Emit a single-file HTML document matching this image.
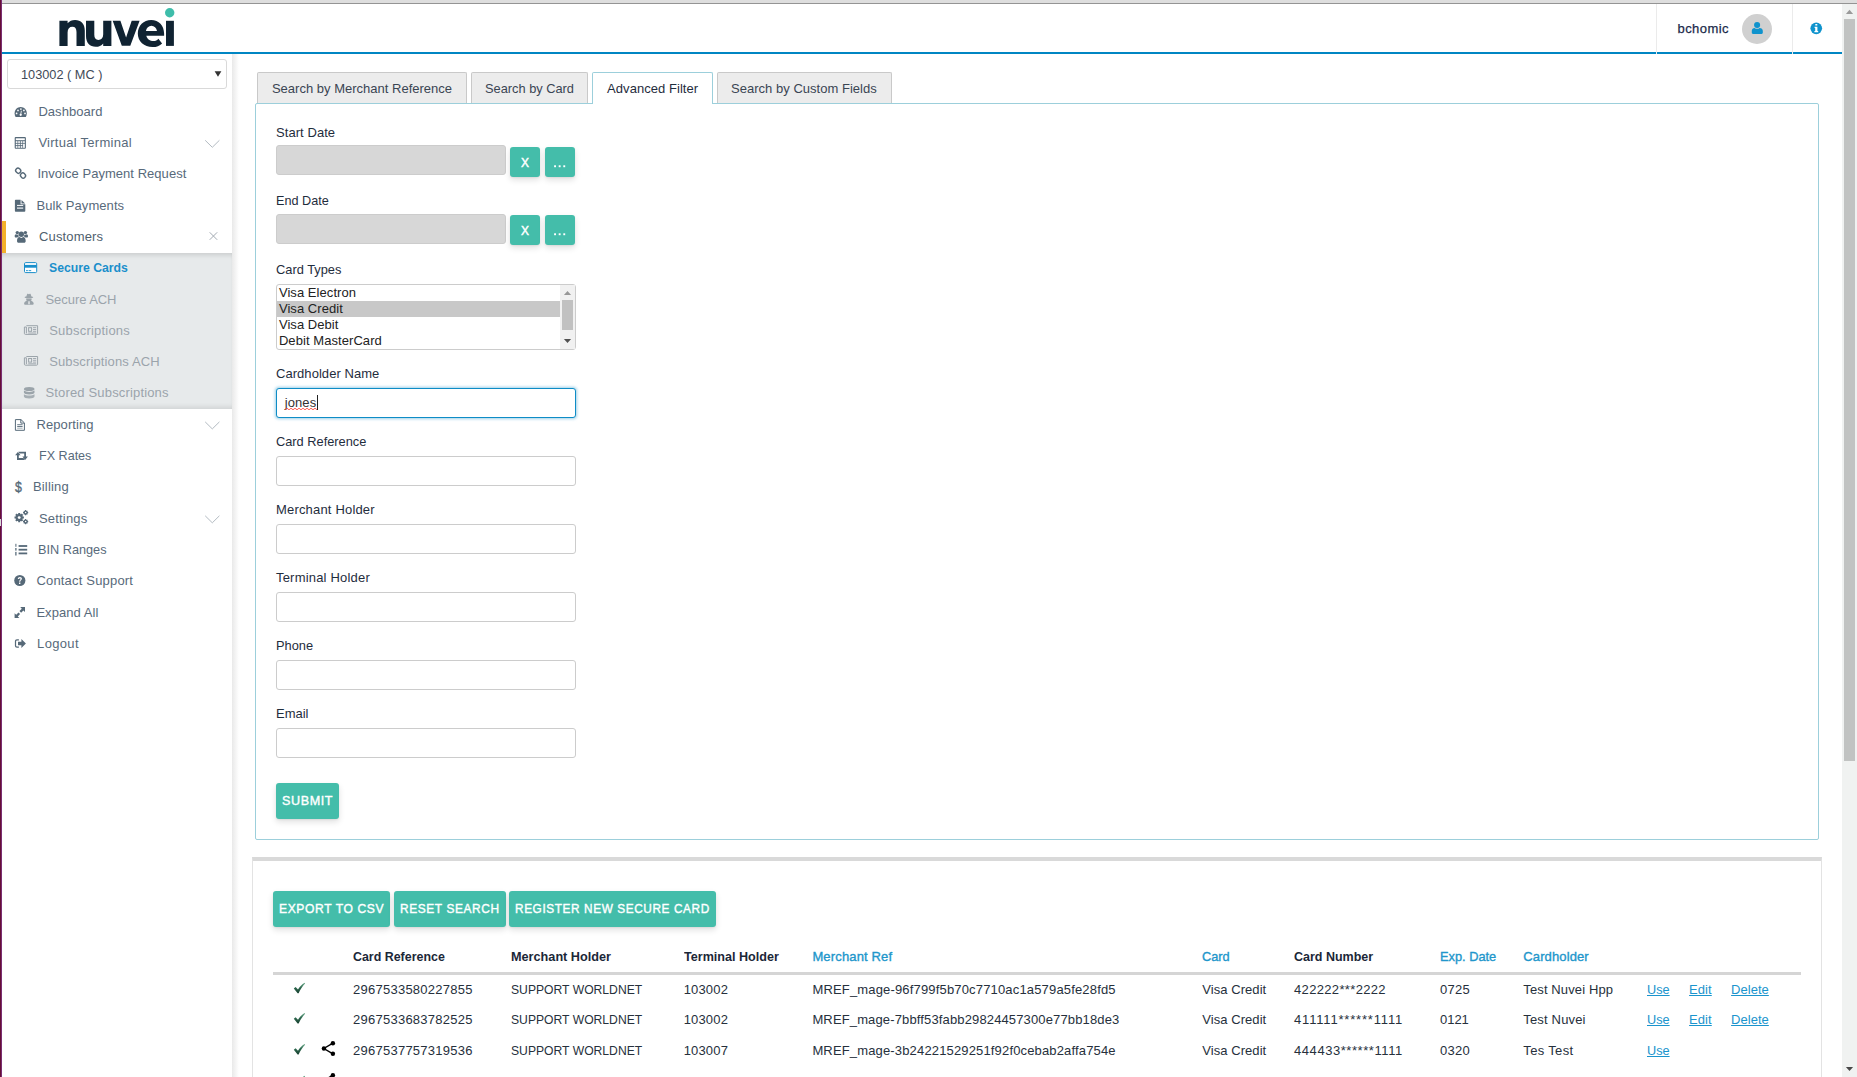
<!DOCTYPE html>
<html>
<head>
<meta charset="utf-8">
<title>Secure Cards</title>
<style>
*{box-sizing:border-box;margin:0;padding:0}
html,body{width:1857px;height:1077px;overflow:hidden;background:#fff}
body{font-family:"Liberation Sans",sans-serif;font-size:13px;color:#1f2d3d;position:relative}
.abs{position:absolute}
.tx{position:absolute;white-space:pre;line-height:20px;font-family:"Liberation Sans",sans-serif}
svg{position:absolute;overflow:visible}
/* window chrome */
#topstrip{left:0;top:0;width:1857px;height:3px;background:#dedede}
#topline{left:2px;top:3px;width:1855px;height:1px;background:#949494}
#leftstripe{left:0;top:0;width:2px;height:1077px;background:linear-gradient(to right,#660f36 0,#660f36 50%,#7a2e72 50%,#7a2e72 100%)}
/* header */
#blueline{left:2px;top:52px;width:1840px;height:2px;background:#0086c3}
.hdiv{top:4px;width:1px;height:50px;background:#ebebeb}
#avatar{left:1742px;top:14px;width:30px;height:30px;border-radius:50%;background:#d0d0d0}
/* scrollbar */
#sbtrack{left:1842px;top:4px;width:15px;height:1073px;background:#f0f2f1}
#sbthumb{left:1844px;top:19px;width:11px;height:742px;background:#c1c3c2}
/* sidebar */
#sideshadow{left:232px;top:54px;width:7px;height:1023px;background:linear-gradient(to right,#e9e9e9,#fff)}
#msel{left:7px;top:59px;width:220px;height:30px;border:1px solid #d9d9d9;border-radius:3px;background:#fff}
#submenu{left:2px;top:253px;width:230px;height:156px;background:#e7eaeb;box-shadow:inset 0 5px 5px -3px rgba(0,0,0,.13),inset 0 -5px 5px -3px rgba(0,0,0,.10)}
#orange{left:2px;top:221px;width:4px;height:32px;background:#f3b02b}
/* tabs */
.tab{top:72px;height:31px;border:1px solid #c9c9c9;border-bottom:none;border-radius:2px 2px 0 0;background:#ececec}
.tab.active{background:#fff;border-color:#9ccfdb;height:31px}
#tabgap{left:593px;top:103px;width:119px;height:1px;background:#fff}
#panel{left:255px;top:103px;width:1564px;height:737px;border:1px solid #9ccfdb;border-radius:2px;background:#fff}
.inp{left:276px;width:300px;height:30px;border:1px solid #ccc;border-radius:3px;background:#fff}
.dinp{left:276px;width:230px;height:30px;border-radius:3px;background:#d7d7d7;border:1px solid #cccccc}
.btn{background:#44bdaa;color:#fff;border-radius:3px;font-weight:bold;font-size:13px;text-align:center;white-space:nowrap;box-shadow:0 3px 6px rgba(0,0,0,.12),0 1px 2px rgba(0,0,0,.06)}
.sbtn{width:30px;height:30px;line-height:30px;font-weight:normal;font-size:14px}
.dot{width:1.8px;height:1.8px;background:#fff}
.bbtn{top:891px;height:36px;line-height:36px;letter-spacing:.6px}
/* listbox */
#lb{left:276px;top:284px;width:300px;height:66px;border:1px solid #ccc;border-radius:3px;background:#fff;overflow:hidden}
#lbsel{left:277px;top:301px;width:283px;height:16px;background:#c8c8c8}
#lbtrack{left:560px;top:285px;width:15px;height:64px;background:#f1f1f1}
#lbthumb{left:562px;top:300px;width:11px;height:30px;background:#c1c1c1}
#focus{left:276px;top:388px;width:300px;height:30px;border:1px solid #0e8cc6;border-radius:3px;background:#fff;box-shadow:0 0 3px 1px rgba(14,140,198,.4)}
/* results box */
#box{left:252px;top:857px;width:1570px;height:230px;border:1px solid #e3e3e3;border-top:4px solid #d9d9d9;background:#fff}
#thline{left:273px;top:972px;width:1528px;height:3px;background:#d5d5d5}
</style>
</head>
<body>
<div class="abs" id="topstrip"></div>
<div class="abs" id="topline"></div>

<!-- header -->
<div class="abs" id="blueline"></div>
<div class="abs hdiv" style="left:1656px"></div>
<div class="abs hdiv" style="left:1792px"></div>
<div class="abs" id="avatar"></div>

<!-- sidebar -->
<div class="abs" id="sideshadow"></div>
<div class="abs" id="msel"></div>
<div class="abs" id="submenu"></div>
<div class="abs" id="orange"></div>

<!-- tabs + panel -->
<div class="abs" id="panel"></div>
<div class="abs tab" style="left:257px;width:210px"></div>
<div class="abs tab" style="left:471px;width:117px"></div>
<div class="abs tab active" style="left:592px;width:121px"></div>
<div class="abs tab" style="left:717px;width:175px"></div>
<div class="abs" id="tabgap"></div>

<!-- form -->
<div class="abs dinp" style="top:145px"></div>
<div class="abs btn sbtn" style="left:510px;top:147px"></div>
<div class="abs btn sbtn" style="left:545px;top:147px"></div>
<div class="abs dinp" style="top:214px"></div>
<div class="abs btn sbtn" style="left:510px;top:215px"></div>
<div class="abs btn sbtn" style="left:545px;top:215px"></div>
<div class="abs" id="lb"></div>
<div class="abs" id="lbsel"></div>
<div class="abs" id="lbtrack"></div>
<div class="abs" id="lbthumb"></div>
<div class="abs" id="focus"></div>
<div class="abs inp" style="top:456px"></div>
<div class="abs inp" style="top:524px"></div>
<div class="abs inp" style="top:592px"></div>
<div class="abs inp" style="top:660px"></div>
<div class="abs inp" style="top:728px"></div>
<div class="abs btn" style="left:276px;top:783px;width:63px;height:36px;line-height:36px;letter-spacing:.5px"></div>

<!-- results -->
<div class="abs" id="box"></div>
<div class="abs btn bbtn" style="left:273px;width:117px"></div>
<div class="abs btn bbtn" style="left:394px;width:112px"></div>
<div class="abs btn bbtn" style="left:509px;width:207px"></div>
<div class="abs" id="thline"></div>

<!-- scrollbar -->
<div class="abs" id="sbtrack"></div>
<div class="abs" id="sbthumb"></div>
<div class="tx" style="left:1677.5px;top:18.0px;line-height:21px;font-size:13px;font-weight:normal;color:#1b2a4a;letter-spacing:0.446px;-webkit-text-stroke:.25px #1b2a4a;">bchomic</div>
<div class="tx" style="left:20.7px;top:64.0px;line-height:21px;font-size:13px;font-weight:normal;color:#3f4a57;transform:scaleX(0.9796);transform-origin:0 50%;">103002 ( MC )</div>
<div class="tx" style="left:38.4px;top:101.0px;line-height:21px;font-size:13px;font-weight:normal;color:#586a7b;letter-spacing:0.049px;">Dashboard</div>
<div class="tx" style="left:38.4px;top:132.0px;line-height:21px;font-size:13px;font-weight:normal;color:#586a7b;letter-spacing:0.272px;">Virtual Terminal</div>
<div class="tx" style="left:37.4px;top:163.0px;line-height:21px;font-size:13px;font-weight:normal;color:#586a7b;letter-spacing:0.035px;">Invoice Payment Request</div>
<div class="tx" style="left:36.5px;top:195.0px;line-height:21px;font-size:13px;font-weight:normal;color:#586a7b;letter-spacing:0.075px;">Bulk Payments</div>
<div class="tx" style="left:39.0px;top:226.0px;line-height:21px;font-size:13px;font-weight:normal;color:#4f5f6e;letter-spacing:0.155px;">Customers</div>
<div class="tx" style="left:48.7px;top:257.0px;line-height:21px;font-size:13px;font-weight:bold;color:#1a8fcb;transform:scaleX(0.9412);transform-origin:0 50%;">Secure Cards</div>
<div class="tx" style="left:45.5px;top:289.0px;line-height:21px;font-size:13px;font-weight:normal;color:#9ba4ab;letter-spacing:-0.061px;">Secure ACH</div>
<div class="tx" style="left:49.2px;top:320.0px;line-height:21px;font-size:13px;font-weight:normal;color:#9ba4ab;letter-spacing:0.213px;">Subscriptions</div>
<div class="tx" style="left:49.2px;top:351.0px;line-height:21px;font-size:13px;font-weight:normal;color:#9ba4ab;letter-spacing:0.132px;">Subscriptions ACH</div>
<div class="tx" style="left:45.5px;top:382.0px;line-height:21px;font-size:13px;font-weight:normal;color:#9ba4ab;letter-spacing:0.160px;">Stored Subscriptions</div>
<div class="tx" style="left:36.4px;top:414.0px;line-height:21px;font-size:13px;font-weight:normal;color:#586a7b;letter-spacing:0.103px;">Reporting</div>
<div class="tx" style="left:38.9px;top:445.0px;line-height:21px;font-size:13px;font-weight:normal;color:#586a7b;transform:scaleX(0.9670);transform-origin:0 50%;">FX Rates</div>
<div class="tx" style="left:32.9px;top:476.0px;line-height:21px;font-size:13px;font-weight:normal;color:#586a7b;letter-spacing:0.202px;">Billing</div>
<div class="tx" style="left:38.9px;top:508.0px;line-height:21px;font-size:13px;font-weight:normal;color:#586a7b;letter-spacing:0.202px;">Settings</div>
<div class="tx" style="left:38.1px;top:539.0px;line-height:21px;font-size:13px;font-weight:normal;color:#586a7b;transform:scaleX(0.9773);transform-origin:0 50%;">BIN Ranges</div>
<div class="tx" style="left:36.4px;top:570.0px;line-height:21px;font-size:13px;font-weight:normal;color:#586a7b;letter-spacing:0.189px;">Contact Support</div>
<div class="tx" style="left:36.4px;top:602.0px;line-height:21px;font-size:13px;font-weight:normal;color:#586a7b;letter-spacing:0.051px;">Expand All</div>
<div class="tx" style="left:37.1px;top:633.0px;line-height:21px;font-size:13px;font-weight:normal;color:#586a7b;letter-spacing:0.327px;">Logout</div>
<div class="tx" style="left:271.9px;top:78.0px;line-height:21px;font-size:13px;font-weight:normal;color:#3a4553;letter-spacing:0.010px;">Search by Merchant Reference</div>
<div class="tx" style="left:484.6px;top:78.0px;line-height:21px;font-size:13px;font-weight:normal;color:#3a4553;transform:scaleX(0.9853);transform-origin:0 50%;">Search by Card</div>
<div class="tx" style="left:607.1px;top:78.0px;line-height:21px;font-size:13px;font-weight:normal;color:#1f2d3d;letter-spacing:0.048px;">Advanced Filter</div>
<div class="tx" style="left:731.0px;top:78.0px;line-height:21px;font-size:13px;font-weight:normal;color:#3a4553;letter-spacing:0.026px;">Search by Custom Fields</div>
<div class="tx" style="left:276.0px;top:122.0px;line-height:21px;font-size:13px;font-weight:normal;color:#1f2d3d;letter-spacing:0.063px;">Start Date</div>
<div class="tx" style="left:276.0px;top:190.0px;line-height:21px;font-size:13px;font-weight:normal;color:#1f2d3d;transform:scaleX(0.9723);transform-origin:0 50%;">End Date</div>
<div class="tx" style="left:276.0px;top:259.0px;line-height:21px;font-size:13px;font-weight:normal;color:#1f2d3d;transform:scaleX(0.9872);transform-origin:0 50%;">Card Types</div>
<div class="tx" style="left:276.0px;top:363.0px;line-height:21px;font-size:13px;font-weight:normal;color:#1f2d3d;letter-spacing:0.049px;">Cardholder Name</div>
<div class="tx" style="left:276.0px;top:431.0px;line-height:21px;font-size:13px;font-weight:normal;color:#1f2d3d;transform:scaleX(0.9839);transform-origin:0 50%;">Card Reference</div>
<div class="tx" style="left:276.0px;top:499.0px;line-height:21px;font-size:13px;font-weight:normal;color:#1f2d3d;letter-spacing:0.178px;">Merchant Holder</div>
<div class="tx" style="left:276.0px;top:567.0px;line-height:21px;font-size:13px;font-weight:normal;color:#1f2d3d;letter-spacing:0.197px;">Terminal Holder</div>
<div class="tx" style="left:276.0px;top:635.0px;line-height:21px;font-size:13px;font-weight:normal;color:#1f2d3d;transform:scaleX(0.9869);transform-origin:0 50%;">Phone</div>
<div class="tx" style="left:276.0px;top:703.0px;line-height:21px;font-size:13px;font-weight:normal;color:#1f2d3d;letter-spacing:-0.004px;">Email</div>
<div class="tx" style="left:278.9px;top:282.0px;line-height:21px;font-size:13px;font-weight:normal;color:#222;letter-spacing:0.062px;">Visa Electron</div>
<div class="tx" style="left:278.9px;top:298.0px;line-height:21px;font-size:13px;font-weight:normal;color:#222;letter-spacing:0.056px;">Visa Credit</div>
<div class="tx" style="left:278.9px;top:314.0px;line-height:21px;font-size:13px;font-weight:normal;color:#222;letter-spacing:0.054px;">Visa Debit</div>
<div class="tx" style="left:278.9px;top:330.0px;line-height:21px;font-size:13px;font-weight:normal;color:#222;letter-spacing:0.068px;">Debit MasterCard</div>
<div class="tx" style="left:284.7px;top:392.0px;line-height:21px;font-size:13px;font-weight:normal;color:#333;letter-spacing:0.105px;">jones</div>
<div class="tx" style="left:282.1px;top:790.0px;line-height:21px;font-size:13px;font-weight:normal;color:#fff;transform:scaleX(0.9669);transform-origin:0 50%;letter-spacing:0.621px;-webkit-text-stroke:.4px #fff;">SUBMIT</div>
<div class="tx" style="left:279.4px;top:898.0px;line-height:21px;font-size:13px;font-weight:normal;color:#fff;transform:scaleX(0.9308);transform-origin:0 50%;letter-spacing:0.645px;-webkit-text-stroke:.4px #fff;">EXPORT TO CSV</div>
<div class="tx" style="left:400.2px;top:898.0px;line-height:21px;font-size:13px;font-weight:normal;color:#fff;transform:scaleX(0.9157);transform-origin:0 50%;letter-spacing:0.655px;-webkit-text-stroke:.4px #fff;">RESET SEARCH</div>
<div class="tx" style="left:515.4px;top:898.0px;line-height:21px;font-size:13px;font-weight:normal;color:#fff;transform:scaleX(0.9082);transform-origin:0 50%;letter-spacing:0.661px;-webkit-text-stroke:.4px #fff;">REGISTER NEW SECURE CARD</div>
<div class="tx" style="left:520.7px;top:152.0px;line-height:21px;font-size:13px;font-weight:normal;color:#fff;transform:scaleX(0.9225);transform-origin:0 50%;-webkit-text-stroke:.45px #fff;">X</div>
<div class="tx" style="left:520.7px;top:220.0px;line-height:21px;font-size:13px;font-weight:normal;color:#fff;transform:scaleX(0.9225);transform-origin:0 50%;-webkit-text-stroke:.45px #fff;">X</div>
<div class="tx" style="left:353.0px;top:946.0px;line-height:21px;font-size:13px;font-weight:bold;color:#1b2738;transform:scaleX(0.9552);transform-origin:0 50%;">Card Reference</div>
<div class="tx" style="left:511.0px;top:946.0px;line-height:21px;font-size:13px;font-weight:bold;color:#1b2738;transform:scaleX(0.9749);transform-origin:0 50%;">Merchant Holder</div>
<div class="tx" style="left:683.7px;top:946.0px;line-height:21px;font-size:13px;font-weight:bold;color:#1b2738;transform:scaleX(0.9672);transform-origin:0 50%;">Terminal Holder</div>
<div class="tx" style="left:812.4px;top:946.0px;line-height:21px;font-size:13px;font-weight:normal;color:#2196cb;letter-spacing:0.150px;-webkit-text-stroke:.35px #2196cb;">Merchant Ref</div>
<div class="tx" style="left:1202.3px;top:946.0px;line-height:21px;font-size:13px;font-weight:normal;color:#2196cb;transform:scaleX(0.9827);transform-origin:0 50%;-webkit-text-stroke:.35px #2196cb;">Card</div>
<div class="tx" style="left:1294.0px;top:946.0px;line-height:21px;font-size:13px;font-weight:bold;color:#1b2738;transform:scaleX(0.9616);transform-origin:0 50%;">Card Number</div>
<div class="tx" style="left:1440.0px;top:946.0px;line-height:21px;font-size:13px;font-weight:normal;color:#2196cb;transform:scaleX(0.9843);transform-origin:0 50%;-webkit-text-stroke:.35px #2196cb;">Exp. Date</div>
<div class="tx" style="left:1523.3px;top:946.0px;line-height:21px;font-size:13px;font-weight:normal;color:#2196cb;letter-spacing:0.119px;-webkit-text-stroke:.35px #2196cb;">Cardholder</div>
<div class="tx" style="left:353.0px;top:979.0px;line-height:21px;font-size:13px;font-weight:normal;color:#26303c;letter-spacing:0.254px;">2967533580227855</div>
<div class="tx" style="left:511.0px;top:979.0px;line-height:21px;font-size:13px;font-weight:normal;color:#26303c;transform:scaleX(0.9346);transform-origin:0 50%;">SUPPORT WORLDNET</div>
<div class="tx" style="left:683.7px;top:979.0px;line-height:21px;font-size:13px;font-weight:normal;color:#26303c;letter-spacing:0.162px;">103002</div>
<div class="tx" style="left:812.4px;top:979.0px;line-height:21px;font-size:13px;font-weight:normal;color:#26303c;letter-spacing:0.167px;">MREF_mage-96f799f5b70c7710ac1a579a5fe28fd5</div>
<div class="tx" style="left:1202.3px;top:979.0px;line-height:21px;font-size:13px;font-weight:normal;color:#26303c;letter-spacing:0.056px;">Visa Credit</div>
<div class="tx" style="left:1294.0px;top:979.0px;line-height:21px;font-size:13px;font-weight:normal;color:#26303c;letter-spacing:0.343px;">422222***2222</div>
<div class="tx" style="left:1440.0px;top:979.0px;line-height:21px;font-size:13px;font-weight:normal;color:#26303c;letter-spacing:0.293px;">0725</div>
<div class="tx" style="left:1523.3px;top:979.0px;line-height:21px;font-size:13px;font-weight:normal;color:#26303c;letter-spacing:0.119px;">Test Nuvei Hpp</div>
<div class="tx" style="left:1647.1px;top:979.0px;line-height:21px;font-size:13px;font-weight:normal;color:#1a94cd;transform:scaleX(0.9773);transform-origin:0 50%;text-decoration:underline;">Use</div>
<div class="tx" style="left:1689.1px;top:979.0px;line-height:21px;font-size:13px;font-weight:normal;color:#1a94cd;letter-spacing:0.065px;text-decoration:underline;">Edit</div>
<div class="tx" style="left:1731.1px;top:979.0px;line-height:21px;font-size:13px;font-weight:normal;color:#1a94cd;letter-spacing:0.024px;text-decoration:underline;">Delete</div>
<div class="tx" style="left:353.0px;top:1009.0px;line-height:21px;font-size:13px;font-weight:normal;color:#26303c;letter-spacing:0.254px;">2967533683782525</div>
<div class="tx" style="left:511.0px;top:1009.0px;line-height:21px;font-size:13px;font-weight:normal;color:#26303c;transform:scaleX(0.9346);transform-origin:0 50%;">SUPPORT WORLDNET</div>
<div class="tx" style="left:683.7px;top:1009.0px;line-height:21px;font-size:13px;font-weight:normal;color:#26303c;letter-spacing:0.162px;">103002</div>
<div class="tx" style="left:812.4px;top:1009.0px;line-height:21px;font-size:13px;font-weight:normal;color:#26303c;letter-spacing:0.139px;">MREF_mage-7bbff53fabb29824457300e77bb18de3</div>
<div class="tx" style="left:1202.3px;top:1009.0px;line-height:21px;font-size:13px;font-weight:normal;color:#26303c;letter-spacing:0.056px;">Visa Credit</div>
<div class="tx" style="left:1294.0px;top:1009.0px;line-height:21px;font-size:13px;font-weight:normal;color:#26303c;letter-spacing:0.820px;">411111******1111</div>
<div class="tx" style="left:1440.0px;top:1009.0px;line-height:21px;font-size:13px;font-weight:normal;color:#26303c;letter-spacing:-0.041px;">0121</div>
<div class="tx" style="left:1523.3px;top:1009.0px;line-height:21px;font-size:13px;font-weight:normal;color:#26303c;letter-spacing:0.166px;">Test Nuvei</div>
<div class="tx" style="left:1647.1px;top:1009.0px;line-height:21px;font-size:13px;font-weight:normal;color:#1a94cd;transform:scaleX(0.9773);transform-origin:0 50%;text-decoration:underline;">Use</div>
<div class="tx" style="left:1689.1px;top:1009.0px;line-height:21px;font-size:13px;font-weight:normal;color:#1a94cd;letter-spacing:0.065px;text-decoration:underline;">Edit</div>
<div class="tx" style="left:1731.1px;top:1009.0px;line-height:21px;font-size:13px;font-weight:normal;color:#1a94cd;letter-spacing:0.024px;text-decoration:underline;">Delete</div>
<div class="tx" style="left:353.0px;top:1040.0px;line-height:21px;font-size:13px;font-weight:normal;color:#26303c;letter-spacing:0.254px;">2967537757319536</div>
<div class="tx" style="left:511.0px;top:1040.0px;line-height:21px;font-size:13px;font-weight:normal;color:#26303c;transform:scaleX(0.9346);transform-origin:0 50%;">SUPPORT WORLDNET</div>
<div class="tx" style="left:683.7px;top:1040.0px;line-height:21px;font-size:13px;font-weight:normal;color:#26303c;letter-spacing:0.162px;">103007</div>
<div class="tx" style="left:812.4px;top:1040.0px;line-height:21px;font-size:13px;font-weight:normal;color:#26303c;letter-spacing:0.155px;">MREF_mage-3b24221529251f92f0cebab2affa754e</div>
<div class="tx" style="left:1202.3px;top:1040.0px;line-height:21px;font-size:13px;font-weight:normal;color:#26303c;letter-spacing:0.056px;">Visa Credit</div>
<div class="tx" style="left:1294.0px;top:1040.0px;line-height:21px;font-size:13px;font-weight:normal;color:#26303c;letter-spacing:0.562px;">444433******1111</div>
<div class="tx" style="left:1440.0px;top:1040.0px;line-height:21px;font-size:13px;font-weight:normal;color:#26303c;letter-spacing:0.293px;">0320</div>
<div class="tx" style="left:1523.3px;top:1040.0px;line-height:21px;font-size:13px;font-weight:normal;color:#26303c;letter-spacing:0.335px;">Tes Test</div>
<div class="tx" style="left:1647.1px;top:1040.0px;line-height:21px;font-size:13px;font-weight:normal;color:#1a94cd;transform:scaleX(0.9773);transform-origin:0 50%;text-decoration:underline;">Use</div>
<svg width="1857" height="1077" viewBox="0 0 1857 1077" style="left:0;top:0;pointer-events:none">
<!-- logo -->
<g fill="#102332">
<path id="ln" d="M59.4,20.8 H67.6 V23.3 C69.3,21.1 71.9,19.9 75.1,19.9 C80.9,19.9 84.8,23.6 84.8,30.6 V45.9 H76.5 V32 C76.5,28.6 75.1,26.8 72.4,26.8 C69.5,26.8 67.6,28.7 67.6,32.4 V45.9 H59.4 Z"/>
<use href="#ln" transform="rotate(180 85.4 33.35)"/>
<path d="M112.7,20.85 H120.4 L126.1,37.4 L131.7,20.85 H139.6 L130.3,45.8 H121.8 Z"/>
<path fill-rule="evenodd" d="M164.1,35.7 H146.3 C147.2,39 150,41 153.5,41 C155.6,41 157.2,40.2 158.4,38.7 L162.1,43.4 C159.8,45.8 156.6,47 152.6,47 C144,47 137.8,41.3 137.8,33.5 C137.8,25.7 143.6,19.95 151.2,19.95 C158.9,19.95 164.1,25.6 164.1,33.4 Z M145.9,31.05 C146.6,27.9 148.6,25.8 151.4,25.8 C154.3,25.8 156.4,27.9 157,31.05 Z"/>
<rect x="166" y="20.8" width="7.9" height="25.1"/>
</g>
<circle cx="169.7" cy="12.7" r="4.7" fill="#3ebdaa"/>

<!-- header icons -->
<g fill="#0f93cd">
<circle cx="1757.1" cy="25.05" r="3.05"/>
<path d="M1751.8,32.7 V30.7 C1751.8,29 1753,27.9 1754.6,27.9 C1755.3,28.5 1756.1,28.8 1757.1,28.8 C1758.1,28.8 1758.9,28.5 1759.6,27.9 C1761.5,27.9 1762.8,29 1762.8,30.7 V32.7 C1762.8,33.4 1762.3,33.9 1761.6,33.9 H1753 C1752.3,33.9 1751.8,33.4 1751.8,32.7 Z"/>
<circle cx="1816.25" cy="28.35" r="5.85"/>
</g>
<path d="M1815.3,24.1 h2 v1.5 h-2 z M1814.6,26.8 h2.8 v4.1 h.8 v1.3 h-3.8 v-1.3 h.8 v-2.8 h-.6 z" fill="#fff"/>

<path id="wavy" d="M285,409.8 L286,409 L287,408.2 L288,409 L289,409.8 L290,409 L291,408.2 L292,409 L293,409.8 L294,409 L295,408.2 L296,409 L297,409.8 L298,409 L299,408.2 L300,409 L301,409.8 L302,409 L303,408.2 L304,409 L305,409.8 L306,409 L307,408.2 L308,409 L309,409.8 L310,409 L311,408.2 L312,409 L313,409.8 L314,409 L315,408.2 L316,409 L317,409.8" fill="none" stroke="#ff3b2f" stroke-width=".9" opacity=".9" stroke-linejoin="round"/>
<rect x="317" y="395" width="1" height="15" fill="#222"/>
<!-- table checks + share -->
<defs><linearGradient id="ck" x1="0" y1="1" x2="0" y2="0"><stop offset="0" stop-color="#17402f"/><stop offset=".55" stop-color="#2f6a50"/><stop offset="1" stop-color="#6fae8f"/></linearGradient>
<path id="chk" d="M293.8,988.6 L295.6,987.1 L298,989.6 C299.6,986.9 301.9,984.4 304.6,982.8 L305.1,983.6 C302.6,986.2 300.3,989.6 298.6,993.3 L297.6,993.3 Z"/></defs>
<use href="#chk" fill="url(#ck)"/>
<use href="#chk" y="30.2" fill="url(#ck)"/>
<use href="#chk" y="61.1" fill="url(#ck)"/>
<use href="#chk" y="93" fill="url(#ck)"/>
<g id="shr" fill="#000" stroke="#000"><circle cx="323.9" cy="1048.5" r="2.2" stroke="none"/><circle cx="332.9" cy="1043.2" r="2.2" stroke="none"/><circle cx="332.9" cy="1053.8" r="2.2" stroke="none"/><path d="M332.9,1043.2 L323.9,1048.5 L332.9,1053.8" fill="none" stroke-width="1.4"/></g>
<use href="#shr" y="32"/>
<g id="dots" fill="#fff"><rect x="554.1" y="165.3" width="1.9" height="1.9"/><rect x="558.7" y="165.3" width="1.9" height="1.9"/><rect x="563.3" y="165.3" width="1.9" height="1.9"/></g><use href="#dots" y="68"/>
<!-- select arrow, list arrows, page scrollbar arrows -->
<path d="M214.6,71.2 h6.8 l-3.4,5.6 z" fill="#333"/>
<path d="M563.9,294.9 h7.2 l-3.6,-4 z" fill="#979797"/>
<path d="M563.9,338.9 h7.2 l-3.6,4 z" fill="#505050"/>
<path d="M1845.9,13.9 h7.2 l-3.6,-4.1 z" fill="#9a9a9a"/>
<path d="M1845.9,1067 h7.2 l-3.6,4.1 z" fill="#484848"/>

<!-- sidebar chevrons / close -->
<g fill="none" stroke="#b3bbc2" stroke-width="1">
<path d="M205.2,140.3 L212.3,147.3 L219.4,140.3"/>
<path d="M205.2,421.9 L212.3,428.9 L219.4,421.9"/>
<path d="M205.2,515.8 L212.3,522.8 L219.4,515.8"/>
</g>
<path d="M209.7,232.3 L217.2,239.8 M217.2,232.3 L209.7,239.8" stroke="#a3abb3" stroke-width="1" fill="none"/>

<!-- sidebar icons -->
<g fill="#566978" stroke="none">
<!-- dashboard -->
<path d="M15.6,116.9 C14.9,115.8 14.6,114.6 14.6,113.2 C14.6,109.8 17.3,107 20.7,107 C24.1,107 26.8,109.8 26.8,113.2 C26.8,114.6 26.5,115.8 25.8,116.9 Z"/>
<g fill="#fff"><circle cx="18" cy="110.4" r=".85"/><circle cx="20.9" cy="109.1" r=".85"/><circle cx="23.9" cy="110.4" r=".85"/><circle cx="16.6" cy="113.4" r=".85"/><circle cx="25" cy="113.4" r=".85"/><circle cx="20.7" cy="114.8" r="1.15"/><path d="M20.9,110.8 h.8 l-.5,3.6 h-.8 z"/></g>
<!-- calculator -->
<rect x="14.7" y="137" width="11.2" height="11.8" rx="1"/>
<g fill="#fff"><rect x="15.8" y="138.3" width="9" height="1.9"/>
<rect x="15.8" y="141.2" width="1.7" height="1.7"/><rect x="18.2" y="141.2" width="1.7" height="1.7"/><rect x="20.7" y="141.2" width="1.7" height="1.7"/><rect x="23.1" y="141.2" width="1.7" height="1.7"/>
<rect x="15.8" y="143.7" width="1.7" height="1.5"/><rect x="18.2" y="143.7" width="1.7" height="1.5"/><rect x="20.7" y="143.7" width="1.7" height="1.5"/><rect x="23.1" y="143.7" width="1.7" height="4.1"/>
<rect x="15.8" y="146.1" width="1.7" height="1.7"/><rect x="18.2" y="146.1" width="1.7" height="1.7"/><rect x="20.7" y="146.1" width="1.7" height="1.7"/></g>
<!-- file-text (bulk payments) -->
<path d="M15.6,199.8 H20.6 V204.2 H25.3 V211 C25.3,211.5 24.9,211.8 24.5,211.8 H15.6 C15.2,211.8 14.9,211.5 14.9,211 V200.6 C14.9,200.2 15.2,199.8 15.6,199.8 Z M21.5,199.9 L25.2,203.4 H21.5 Z"/>
<rect x="17" y="204.9" width="6.2" height="1" fill="#fff"/><rect x="17" y="207.3" width="6.2" height="1.7" fill="#c3cbd2"/>
<!-- users -->
<circle cx="21.3" cy="234.3" r="2.7"/>
<path d="M17,241 C17,238.6 18.1,237.2 19.4,237.1 C19.9,237.6 20.6,237.9 21.3,237.9 C22,237.9 22.7,237.6 23.2,237.1 C24.6,237.2 25.7,238.6 25.7,241 C25.7,242 25,242.8 24.1,242.8 H18.6 C17.7,242.8 17,242 17,241 Z"/>
<circle cx="17.3" cy="232.6" r="1.7"/><circle cx="25.4" cy="232.6" r="1.7"/>
<path d="M14.7,236.2 C14.7,235 15.3,234.3 16,234.3 C16.4,234.6 16.8,234.8 17.3,234.8 C17.7,234.8 18,234.7 18.3,234.5 C18.3,235.3 18.6,236 19,236.6 C18.3,236.7 17.8,237 17.4,237.5 H15.8 C15.1,237.5 14.7,237 14.7,236.2 Z"/>
<path d="M28,236.2 C28,235 27.4,234.3 26.7,234.3 C26.3,234.6 25.9,234.8 25.4,234.8 C25,234.8 24.7,234.7 24.4,234.5 C24.4,235.3 24.1,236 23.7,236.6 C24.4,236.7 24.9,237 25.3,237.5 H26.9 C27.6,237.5 28,237 28,236.2 Z"/>
<!-- retweet -->
<path d="M15.1,455.3 L17.85,451.9 L20.6,455.3 Z M17,455 H18.8 V458.1 H23.4 L24.8,459.9 H17 Z M22.4,456.5 L25.15,459.95 L27.9,456.5 Z M24.2,456.8 H26 V451.8 H18.2 L19.6,453.6 H24.2 Z"/>
<!-- list-ol -->
<rect x="18.6" y="545.1" width="8.6" height="1.8"/><rect x="18.6" y="548.8" width="8.6" height="1.8"/><rect x="18.6" y="552.5" width="8.6" height="1.8"/>
<rect x="15.4" y="543.8" width="1" height="3"/><rect x="15" y="548" width="1.7" height="2.6" opacity=".75"/><rect x="15" y="551.9" width="1.7" height="3.6" opacity=".75"/>
<!-- question circle -->
<circle cx="19.8" cy="580.5" r="5.6"/>
<!-- expand -->
<path d="M25,607.1 V612 L23.4,610.4 L21.1,612.7 L19.5,611.1 L21.8,608.8 L20.2,607.1 Z M14.6,618.1 V613.2 L16.2,614.8 L18.5,612.5 L20.1,614.1 L17.8,616.4 L19.4,618.1 Z"/>
<!-- sign out -->
<path d="M25.9,643.5 L21.4,647.9 V645.3 H18 V641.7 H21.4 V639.1 Z"/>
<path d="M18.9,639.3 H16.9 C15.8,639.3 14.9,640.2 14.9,641.3 V645.7 C14.9,646.8 15.8,647.7 16.9,647.7 H18.9 V646.5 H17 C16.5,646.5 16.1,646.1 16.1,645.6 V641.4 C16.1,640.9 16.5,640.5 17,640.5 H18.9 Z"/>
<!-- cogs -->
<circle cx="19.2" cy="517.6" r="3.6"/>
<g stroke="#566978" stroke-width="2" fill="none"><path d="M19.2,512.9 V522.3 M14.5,517.6 H23.9 M15.9,514.3 L22.5,520.9 M22.5,514.3 L15.9,520.9"/></g>
<circle cx="25.6" cy="512.6" r="1.9"/><circle cx="25.6" cy="521.6" r="1.9"/>
<g stroke="#566978" stroke-width="1.2" fill="none"><path d="M25.6,510 V515.2 M23,512.6 H28.2 M23.8,510.8 L27.4,514.4 M27.4,510.8 L23.8,514.4 M25.6,519 V524.2 M23,521.6 H28.2 M23.8,519.8 L27.4,523.4 M27.4,519.8 L23.8,523.4"/></g>
</g>
<g fill="#fff"><circle cx="19.2" cy="517.6" r="1.4"/><circle cx="25.6" cy="512.6" r=".75"/><circle cx="25.6" cy="521.6" r=".75"/></g>
<!-- question mark -->
<path d="M17.8,579 C17.8,577.7 18.7,577 19.9,577 C21.1,577 21.9,577.7 21.9,578.8 C21.9,580.2 20.3,580.3 20.3,581.8 H19.1 C19.1,580 20.6,579.8 20.6,578.9 C20.6,578.4 20.3,578.2 19.9,578.2 C19.4,578.2 19.1,578.5 19.1,579 Z M19,582.6 h1.4 v1.4 h-1.4 z" fill="#fff"/>
<!-- link -->
<g fill="none" stroke="#566978" stroke-width="1.4">
<rect x="15.6" y="168.4" width="5.2" height="4.6" rx="2.2" transform="rotate(45 18.2 170.7)"/>
<rect x="20.4" y="173.2" width="5.2" height="4.6" rx="2.2" transform="rotate(45 23 175.5)"/>
</g>
<!-- file-text-o (reporting) -->
<path d="M15.4,419.6 H21 L24.4,422.9 V430.3 H15.4 Z M20.8,419.8 V423.1 H24.2" fill="none" stroke="#566978" stroke-width="1"/>
<g fill="#566978"><rect x="17.2" y="424.3" width="5.4" height=".9"/><rect x="17.2" y="426" width="5.4" height=".9"/><rect x="17.2" y="427.7" width="5.4" height=".9" opacity=".6"/></g>

<!-- submenu icons -->
<!-- credit card -->
<rect x="24.5" y="262.6" width="12.2" height="10" rx="1.2" fill="#fff" stroke="#1a8fcb" stroke-width="1"/>
<rect x="24.5" y="264.9" width="12.2" height="2.8" fill="#1a8fcb"/>
<rect x="26" y="270.2" width="1.9" height=".9" fill="#1a8fcb"/><rect x="28.6" y="270.2" width="2.6" height=".9" fill="#1a8fcb"/>
<g fill="#9ba4aa">
<!-- user secret -->
<path d="M26.3,296.4 L27.2,294.1 C27.3,293.8 27.7,293.6 28,293.8 L28.9,294.2 L29.8,293.8 C30.1,293.6 30.5,293.8 30.6,294.1 L31.5,296.4 C32.5,296.6 33.2,296.9 33.2,297.2 C33.2,297.8 31.3,298.2 28.9,298.2 C26.5,298.2 24.6,297.8 24.6,297.2 C24.6,296.9 25.3,296.6 26.3,296.4 Z"/>
<path d="M26.2,298.6 H31.6 V299.6 C31.6,300 31.4,300.4 31.1,300.7 C32.7,301.2 33.7,302.4 33.7,303.8 C33.7,304.3 33.3,304.7 32.8,304.7 H25 C24.5,304.7 24.1,304.3 24.1,303.8 C24.1,302.4 25.1,301.2 26.7,300.7 C26.4,300.4 26.2,300 26.2,299.6 Z"/>
<path d="M28,301.3 h.7 v3 h-.7 z M29.2,301.3 h.7 v3 h-.7 z" fill="#e7eaeb"/>
<!-- database -->
<ellipse cx="29.2" cy="388.9" rx="5.3" ry="2"/>
<path d="M23.9,390.6 C25,391.5 27,391.9 29.2,391.9 C31.4,391.9 33.4,391.5 34.5,390.6 V392.4 C34.5,393.5 32.1,394.4 29.2,394.4 C26.3,394.4 23.9,393.5 23.9,392.4 Z"/>
<path d="M23.9,394.2 C25,395.1 27,395.5 29.2,395.5 C31.4,395.5 33.4,395.1 34.5,394.2 V396.4 C34.5,397.5 32.1,398.4 29.2,398.4 C26.3,398.4 23.9,397.5 23.9,396.4 Z" opacity=".85"/>
</g>
<!-- newspapers -->
<g id="np" fill="none" stroke="#9ba4aa" stroke-width="1">
<path d="M26.4,325.7 H37.6 V333.5 C37.6,334 37.2,334.4 36.7,334.4 H25.4 C24.8,334.4 24.4,334 24.4,333.4 V327 H26.4 V333.3"/>
<rect x="28.6" y="327.7" width="3" height="3.6"/>
<path d="M33,327.7 H36.2 M33,329.5 H36.2 M33,331.3 H36.2 M28.2,333 H36.2" stroke-width=".9"/>
</g>
<use href="#np" y="30.8"/>
</svg>
<div class="tx" style="left:14.8px;top:476px;line-height:22px;font-size:14px;font-weight:normal;color:#566978;-webkit-text-stroke:.35px #566978;transform:scaleX(.88);transform-origin:0 50%">$</div>


<div class="abs" id="leftstripe"></div>
<div class="abs" style="left:0;top:519px;width:1px;height:7px;background:#dcdedb"></div>
</body>
</html>
